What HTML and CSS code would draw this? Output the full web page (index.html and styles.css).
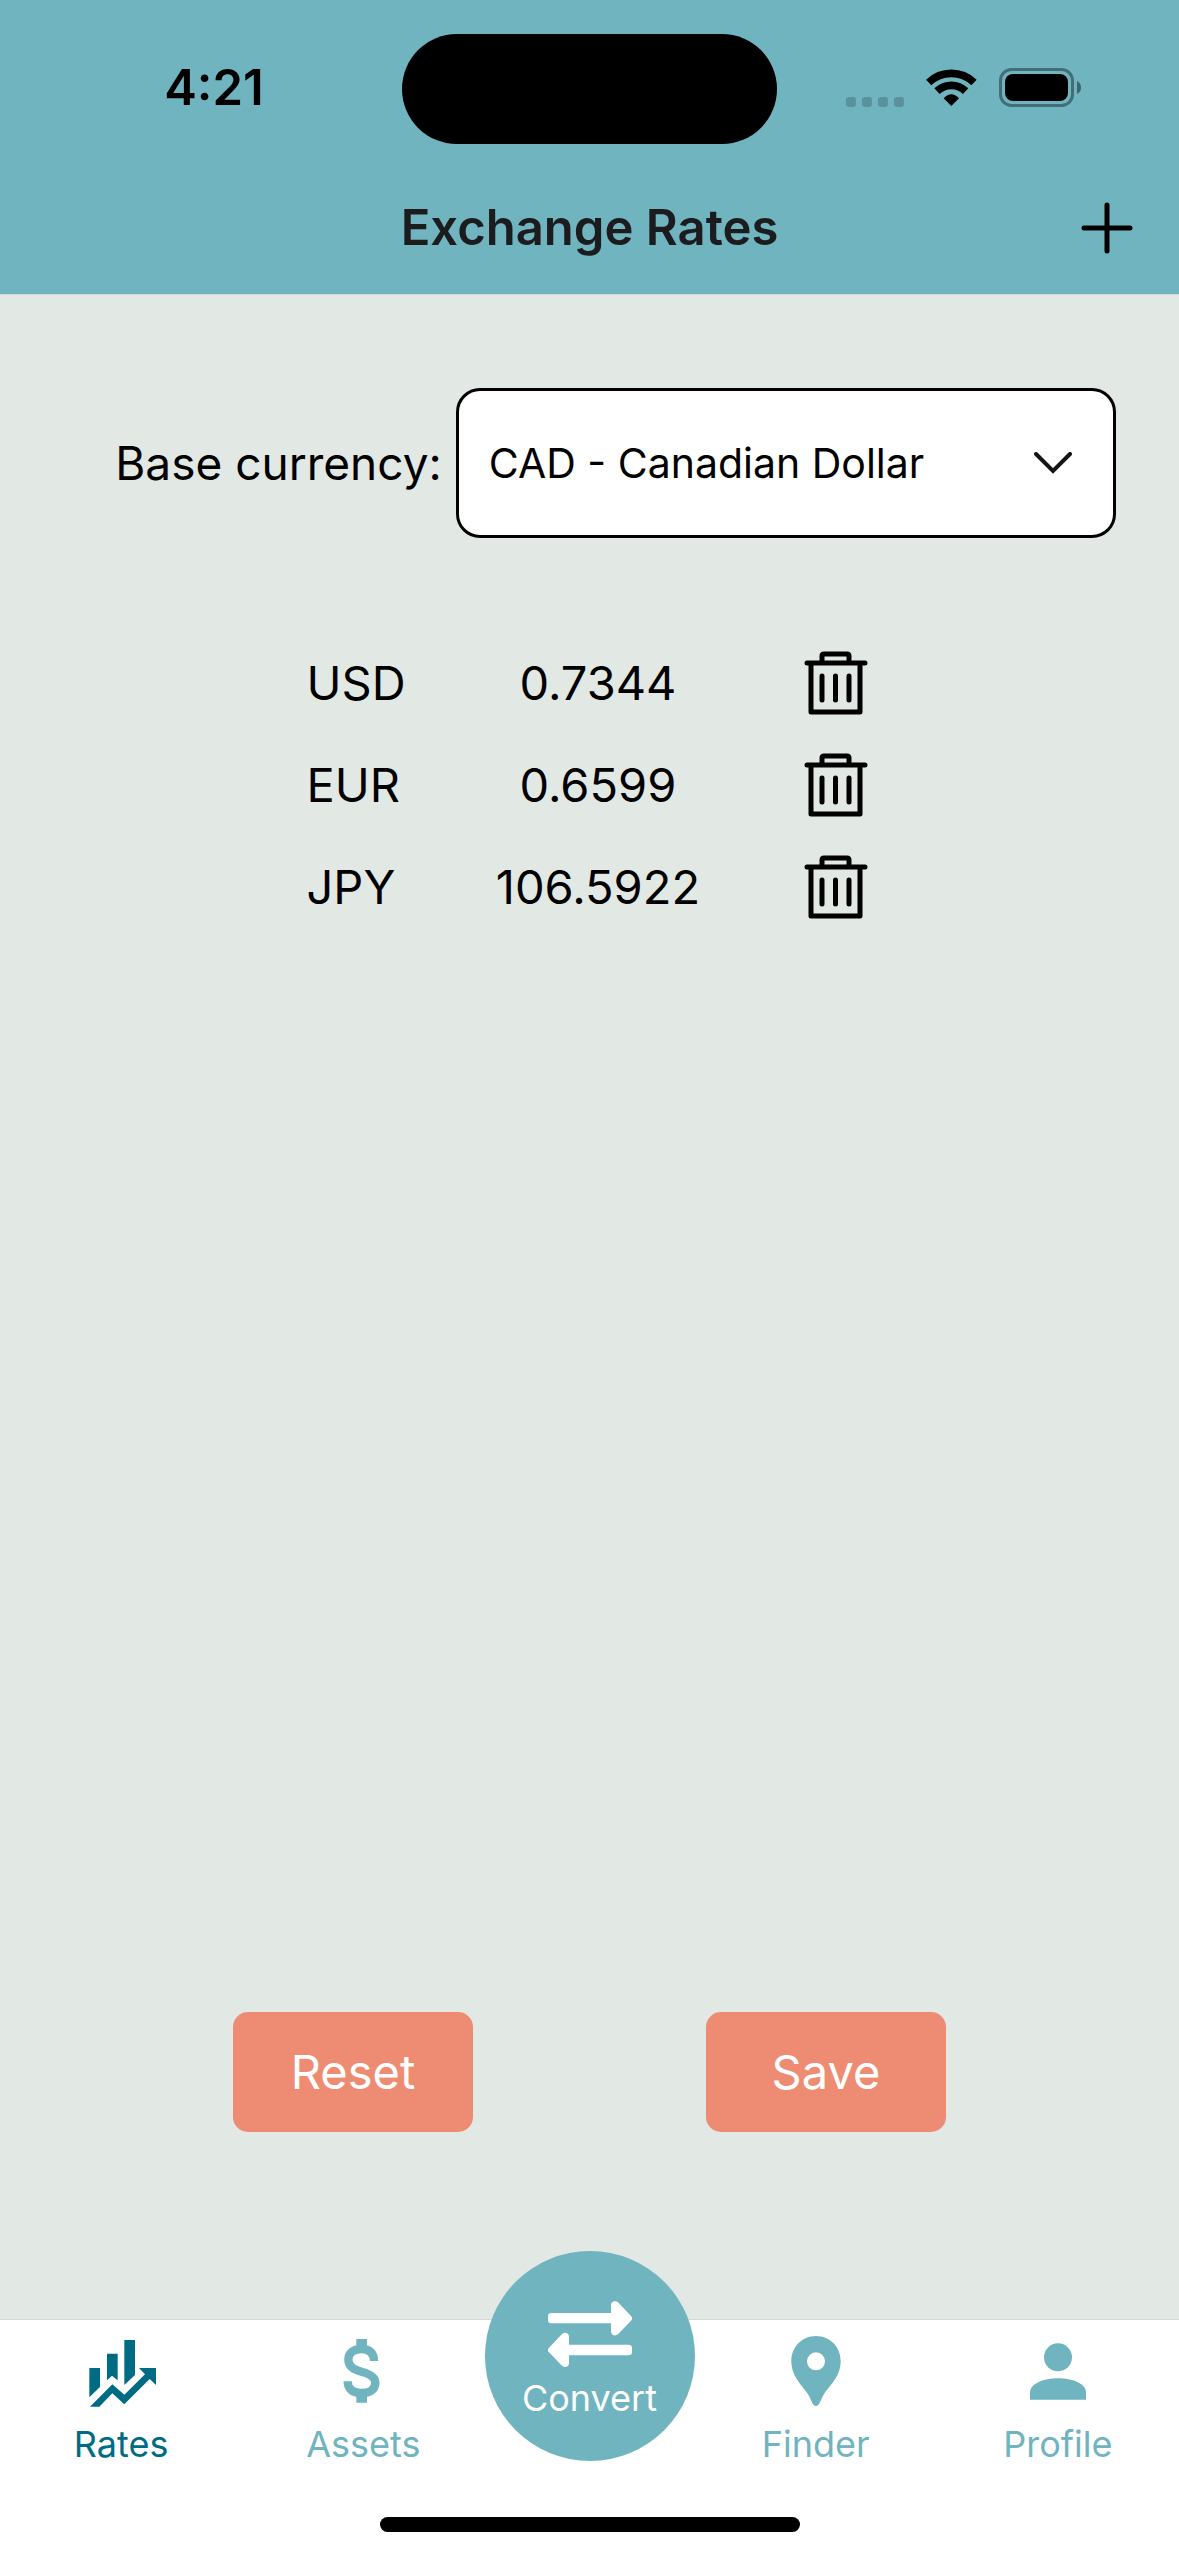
FILE: index.html
```html
<!DOCTYPE html>
<html lang="en">
<head>
<meta charset="utf-8">
<meta name="viewport" content="width=device-width, initial-scale=1">
<title>Exchange Rates</title>
<link rel="stylesheet" href="styles.css">
</head>
<body>
<header class="header">
  <div class="status">
    <time class="clock">4:21</time>
    <div class="island"></div>
    <div class="indicators">
      <svg class="dots" viewBox="0 0 58 10" aria-hidden="true">
        <rect width="10" height="10" rx="3"/><rect x="16" width="10" height="10" rx="3"/><rect x="32" width="10" height="10" rx="3"/><rect x="48" width="10" height="10" rx="3"/>
      </svg>
      <svg class="wifi" viewBox="378 117 153 111" aria-hidden="true">
        <path fill="none" stroke="#000" stroke-width="23" d="M386 157.500A98 98 0 0 1 522 157.500M411 183.400A62 62 0 0 1 497 183.400"/>
        <path d="M454 228L431 205Q454 181 477 205Z"/>
      </svg>
      <svg class="battery" viewBox="0 0 82 39" aria-hidden="true">
        <rect x="1.500" y="1.500" width="72" height="36" rx="11" fill="none" stroke="#436e76" stroke-width="3"/>
        <rect x="6" y="6" width="63" height="27" rx="8"/>
        <path fill="#3d646b" d="M78 13Q82 15 82 19.500T78 26Z"/>
      </svg>
    </div>
  </div>
  <div class="nav">
    <h1 class="title">Exchange Rates</h1>
    <button class="icon-button add" type="button" aria-label="Add currency">
      <svg viewBox="0 0 52 52" width="52" height="52"><path fill="none" stroke="#000" stroke-width="5" stroke-linecap="round" d="M26 3V49M3 26H49"/></svg>
    </button>
  </div>
</header>

<main class="main">
  <div class="base">
    <label class="base-label" for="base">Base currency:</label>
    <div class="picker">
      <select class="select" id="base">
        <option>CAD - Canadian Dollar</option>
      </select>
      <svg class="chevron" viewBox="0 0 38 22" aria-hidden="true"><path fill="none" stroke="#151515" stroke-width="4" stroke-linecap="round" d="M2 2L19 19L36 2"/></svg>
    </div>
  </div>

  <table class="rates">
    <tbody>
      <tr>
        <th class="code" scope="row">USD</th><td class="value">0.7344</td>
        <td class="remove"><button class="icon-button" type="button" aria-label="Remove USD"><svg class="trash" viewBox="0 0 64 64"><use href="#trash"/></svg></button></td>
      </tr>
      <tr>
        <th class="code" scope="row">EUR</th><td class="value">0.6599</td>
        <td class="remove"><button class="icon-button" type="button" aria-label="Remove EUR"><svg class="trash" viewBox="0 0 64 64"><use href="#trash"/></svg></button></td>
      </tr>
      <tr>
        <th class="code" scope="row">JPY</th><td class="value">106.5922</td>
        <td class="remove"><button class="icon-button" type="button" aria-label="Remove JPY"><svg class="trash" viewBox="0 0 64 64"><use href="#trash"/></svg></button></td>
      </tr>
    </tbody>
  </table>

  <div class="actions">
    <button class="action" type="button">Reset</button>
    <button class="action" type="button">Save</button>
  </div>
</main>

<footer class="footer">
  <nav class="tabs">
    <a class="tab active" href="#rates" aria-current="page">
      <svg class="tab-icon" viewBox="117 57 252 252"><path d="M148 174H180V231L148 262ZM201 131H233V211L216 197L201 211ZM253 90H285V195L253 225ZM150 290L217 223L253 254L315 193L297 174H348V225L329 207L253 283L217 250L178 290Z"/></svg>
      <span>Rates</span>
    </a>
    <a class="tab" href="#assets">
      <svg class="tab-icon" viewBox="842 57 252 252"><path d="M948 87H980V118H948ZM948 248H980V278H948Z"/><path fill="none" stroke="currentColor" stroke-width="25" d="M1001 153C1001 126 985 117 964 117C938 117 924 130 924 149C924 172 944 179 964 185C990 192 1005 201 1005 218C1005 239 988 249 963 249C938 249 922 238 922 214"/></svg>
      <span>Assets</span>
    </a>
    <a class="convert" href="#convert">
      <svg class="swap" viewBox="231 184 252 198"><path d="M241 220H420V197C420 185 432 181 441 188L480 229Q487 236 480 243L441 284C432 291 420 287 420 275V251H241Q231 251 231 241V230Q231 220 241 220ZM473 315H294V292C294 280 282 276 273 283L234 324Q227 331 234 338L273 378C282 386 294 381 294 370V347H473Q483 347 483 337V325Q483 315 473 315Z"/></svg>
      <span>Convert</span>
    </a>
    <a class="tab" href="#finder">
      <svg class="tab-icon" viewBox="102 57 252 252"><path fill-rule="evenodd" d="M228 78C186 78 154 111 154 153C154 200 186 225 205 254C215 271 217 287 228 288C239 287 241 271 251 254C270 225 302 200 302 153C302 111 270 78 228 78ZM228 127A27 27 0 1 1 228 181A27 27 0 1 1 228 127Z"/></svg>
      <span>Finder</span>
    </a>
    <a class="tab" href="#profile">
      <svg class="tab-icon" viewBox="828 57 252 252"><circle cx="954" cy="142" r="42"/><path d="M870 269V248C870 220 912 205 954 205S1038 220 1038 248V269Z"/></svg>
      <span>Profile</span>
    </a>
  </nav>
  <div class="home"></div>
</footer>

<svg class="symbols" aria-hidden="true">
  <symbol id="trash" viewBox="0 0 64 64">
    <path fill="none" stroke="#000" stroke-width="5" stroke-linecap="round" stroke-linejoin="round" d="M3 12H61M7 12V61H56V12M18 12V5Q18 3 20 3H43Q45 3 45 5V12M18 25V49M31.500 25V49M45 25V49"/>
  </symbol>
</svg>
</body>
</html>
```
FILE: styles.css
```css
* {
  box-sizing: border-box;
}

body {
  margin: 0;
  min-height: 100vh;
  display: flex;
  flex-direction: column;
  background: #e2e8e4;
  color: #000;
  font-family: Inter, "Liberation Sans", sans-serif;
  font-size: 47px;
  line-height: 60px;
}

button,
select {
  font: inherit;
  color: inherit;
  border: 0;
}

svg {
  display: block;
  fill: currentColor;
}

.symbols {
  display: none;
}

/* Header */
.header {
  background: #6fb4bf;
  border-bottom: 1px solid #d5dad6;
}

.status {
  display: grid;
  grid-template-columns: 1fr 375px 1fr;
  align-items: center;
  padding: 34px 0 18px;
}

.clock {
  padding: 0 0 3px 26px;
  text-align: center;
  font-size: 49px;
  font-weight: 600;
}

.island {
  height: 110px;
  border-radius: 55px;
  background: #000;
}

.indicators {
  display: flex;
  justify-content: flex-end;
  align-items: center;
  gap: 22px;
  padding: 0 98px 3px 0;
}

.dots {
  width: 58px;
  height: 10px;
  margin-right: 10px;
  align-self: flex-end;
  fill: #5a929b;
}

.wifi {
  width: 51px;
  height: 37px;
}

.dots {
  margin-right: 0;
}

.battery {
  width: 82px;
  height: 39px;
}

.nav {
  display: grid;
  grid-template-columns: 1fr auto 1fr;
  align-items: center;
  height: 132px;
  padding: 0 46px;
}

.title {
  grid-column: 2;
  margin: 0;
  color: #1c1c1e;
  font-size: 49px;
  font-weight: 600;
}

.icon-button {
  padding: 0;
  background: none;
}

.add {
  justify-self: end;
}

/* Content */
.main {
  flex: 1;
  display: flex;
  flex-direction: column;
  padding: 93px 0 187px;
}

.base {
  display: flex;
  justify-content: flex-end;
  align-items: center;
  gap: 14px;
}

.base-label {
  white-space: nowrap;
  font-size: 46px;
}

.picker {
  width: 56%;
  margin-right: 63px;
  display: grid;
  align-items: center;
}

.select {
  grid-area: 1 / 1;
  width: 100%;
  height: 150px;
  padding: 0 110px 0 30px;
  appearance: none;
  background: #fff;
  border: 3px solid #000;
  border-radius: 24px;
  font-size: 41px;
}

.chevron {
  grid-area: 1 / 1;
  justify-self: end;
  width: 38px;
  height: 22px;
  margin-right: 44px;
  pointer-events: none;
}

.rates {
  width: 48%;
  margin: 94px auto 0;
  table-layout: fixed;
  border-collapse: collapse;
}

.rates tr {
  height: 102px;
}

.rates th,
.rates td {
  padding: 0;
}

.code {
  width: 33%;
  text-align: left;
  font-weight: 400;
}

.value {
  width: 37%;
  text-align: center;
}

.remove .icon-button {
  display: block;
  margin: 0 4px 0 auto;
}

.trash {
  width: 64px;
  height: 64px;
}

.actions {
  display: flex;
  justify-content: space-evenly;
  margin-top: auto;
}

.action {
  width: 240px;
  height: 120px;
  border-radius: 15px;
  background: #ee8c73;
  color: #fff;
}

/* Tab bar */
.footer {
  background: #fff;
  border-top: 1px solid #d5dad6;
  font-size: 36px;
  line-height: 44px;
}

.tabs {
  display: flex;
  align-items: flex-start;
}

.tab,
.convert {
  display: flex;
  flex-direction: column;
  align-items: center;
  gap: 9px;
  text-decoration: none;
}

.tab {
  flex: 1;
  padding-top: 9px;
  color: #6fb4bf;
}

.active {
  color: #006c84;
}

.tab-icon {
  width: 84px;
  height: 84px;
}

.convert {
  width: 210px;
  height: 210px;
  margin-top: -69px;
  padding-top: 50px;
  border-radius: 50%;
  background: #6fb4bf;
  color: #fff;
}

.swap {
  width: 84px;
  height: 66px;
}

.home {
  width: 420px;
  height: 15px;
  margin: 51px auto 24px;
  border-radius: 8px;
  background: #000;
}
```
